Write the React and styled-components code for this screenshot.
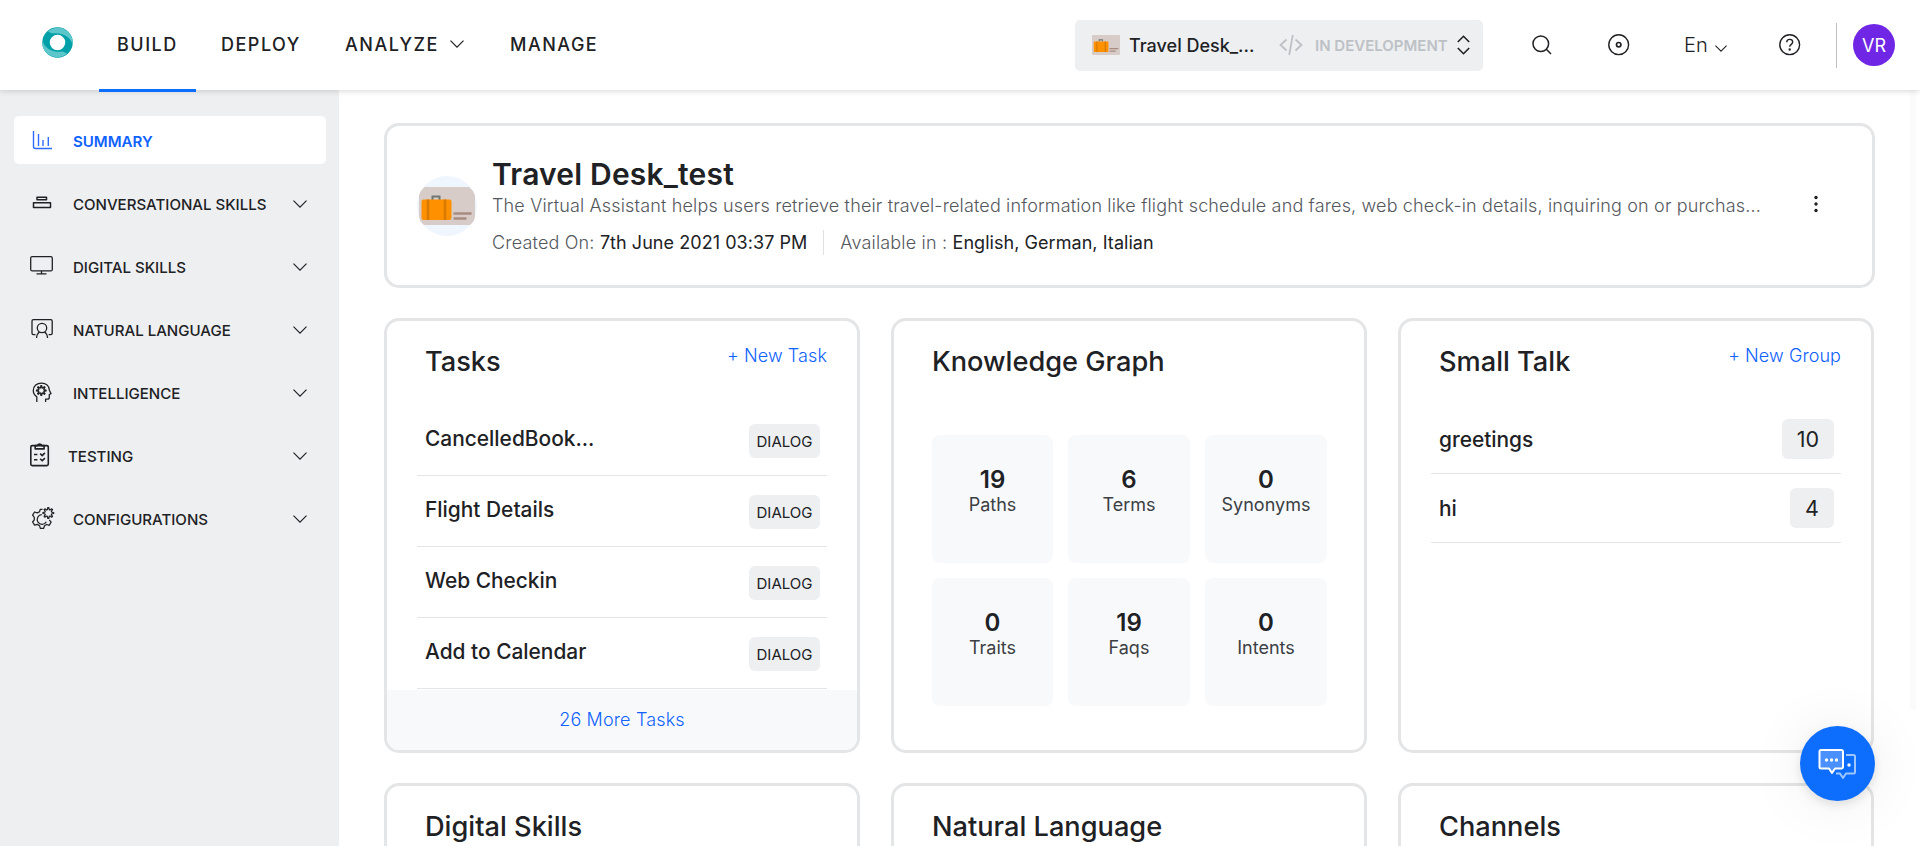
import React from "react";
import styled, { createGlobalStyle } from "styled-components";

const GlobalStyle = createGlobalStyle`
  * { box-sizing: border-box; }
  body { margin: 0; background: #fff; color: #202124; font-family: Inter, "Liberation Sans", sans-serif; overflow: hidden; }
`;

const Page = styled.div`
  display: flex;
  flex-direction: column;
  height: 846px;
  width: 1920px;
  overflow: hidden;
`;

const TopBar = styled.header`
  display: flex;
  align-items: center;
  flex: none;
  height: 90px;
  padding-left: 42px;
  background: #fff;
  box-shadow: 0 1px 6px rgba(0, 0, 0, 0.16);
  z-index: 1;
`;

const Logo = styled.svg`
  flex: none;
  margin: 0 26px 6px 0;
`;

const Nav = styled.nav`
  display: flex;
  height: 92px;
  align-self: flex-start;
  flex: 1;
`;

const NavItem = styled.a`
  display: flex;
  align-items: center;
  gap: 11px;
  width: ${(p) => p.$width}px;
  padding: 0 0 1px 18px;
  margin-right: ${(p) => p.$after || 0}px;
  border-bottom: 3px solid ${(p) => (p.$active ? "#0d6efd" : "transparent")};
  font-size: 18px;
  font-weight: 500;
  letter-spacing: 1.5px;
`;

const BotSelect = styled.div`
  display: flex;
  align-items: center;
  width: 408px;
  height: 51px;
  margin-right: 49px;
  padding-left: 17px;
  border-radius: 5px;
  background: #eeeff1;
`;

const BotName = styled.span`
  width: 140px;
  margin: 0 10px 0 9px;
  font-size: 18px;
  font-weight: 500;
`;

const BotStatus = styled.span`
  width: 142px;
  margin-left: 12px;
  font-size: 15px;
  font-weight: 600;
  color: #bdc1c6;
  white-space: nowrap;
`;

const ToolIcon = styled.svg`
  flex: none;
  margin-right: ${(p) => p.$after}px;
`;

const Language = styled.div`
  display: flex;
  align-items: center;
  gap: 7px;
  width: 95px;
  font-size: 20px;
  font-weight: 300;
  svg { margin-top: 7px; }
`;

const Avatar = styled.div`
  display: flex;
  align-items: center;
  justify-content: center;
  width: 42px;
  height: 42px;
  margin: 0 25px 0 16px;
  border-radius: 50%;
  background: #7027e5;
  color: #fff;
  font-size: 18px;
`;

const Divider = styled.span`
  width: 1px;
  height: ${(p) => p.$height}px;
  background: ${(p) => p.$color};
`;

const Body = styled.div`
  display: flex;
  flex: 1;
  min-height: 0;
`;

const Sidebar = styled.aside`
  display: flex;
  flex-direction: column;
  gap: 15px;
  width: 339px;
  flex: none;
  padding: 26px 13px 0 14px;
  background: #eeeff1;
`;

const SideItem = styled.a`
  display: grid;
  grid-template-columns: ${(p) => p.$labelAt}px 1fr 14px;
  align-items: center;
  height: 48px;
  padding: 2px 19px 0 14px;
  border-radius: 5px;
  background: ${(p) => (p.$active ? "#fff" : "transparent")};
  color: ${(p) => (p.$active ? "#0f62fe" : "#202124")};
  font-size: 15.05px;
  font-weight: ${(p) => (p.$active ? 600 : 500)};
  white-space: nowrap;
`;

const Main = styled.main`
  display: flex;
  flex-direction: column;
  gap: 30px;
  width: 1571px;
  flex: none;
  padding: 33px 36px 0 45px;
  overflow: hidden;
`;

const ScrollTrack = styled.div`
  width: 6px;
  height: 620px;
  border-radius: 0 0 4px 4px;
  background: #fbfbfc;
`;

const Card = styled.section`
  display: flex;
  flex-direction: column;
  flex: none;
  height: ${(p) => p.$height}px;
  border: 3px solid #e4e5e7;
  border-radius: 15px;
  background: #fff;
  overflow: hidden;
`;

const Summary = styled(Card)`
  flex-direction: row;
  margin-right: -1px;
  padding-left: 30px;
`;

const SummaryText = styled.div`
  width: 1280px;
  margin-left: 15px;
  padding-top: 32px;
`;

const BotTitle = styled.h1`
  margin: 0;
  font-size: 30px;
  line-height: 32px;
  font-weight: 600;
  letter-spacing: 0.2px;
`;

const Description = styled.p`
  margin: 0;
  font-size: 18px;
  line-height: 31px;
  font-weight: 300;
  letter-spacing: 0.155px;
  color: #54585d;
  white-space: nowrap;
`;

const Meta = styled.div`
  display: flex;
  align-items: center;
  height: 43px;
  font-size: 18px;
  letter-spacing: 0.05px;
  color: #202124;
  white-space: pre;
`;

const MetaLabel = styled.span`
  font-weight: 300;
  color: #54585d;
  letter-spacing: 0.18px;
`;

const MetaGap = styled.span`
  display: flex;
  padding: 0 16px;
`;

const Kebab = styled.svg`
  margin: 68px 0 0 41px;
`;

const Grid = styled.div`
  display: grid;
  grid-template-columns: repeat(3, 476px);
  gap: 30px 31px;
`;

const CardHead = styled.div`
  display: flex;
  align-items: flex-start;
  justify-content: space-between;
  flex: none;
  height: 84px;
  padding: 24px 30px 0 38px;
`;

const CardTitle = styled.h2`
  margin: 0;
  font-size: 27.2px;
  line-height: 33px;
  font-weight: 500;
`;

const AddLink = styled.a`
  font-size: 18px;
  line-height: 22px;
  font-weight: 300;
  letter-spacing: 0.08px;
  color: #0f62fe;
`;

const List = styled.div`
  margin: 0 30px;
`;

const ListRow = styled.div`
  display: flex;
  align-items: ${(p) => (p.$compact ? "center" : "flex-start")};
  justify-content: space-between;
  height: ${(p) => (p.$compact ? 69 : 71)}px;
  padding: ${(p) => (p.$compact ? "0 7px 0 8px" : "19px 7px 0 8px")};
  border-bottom: 1px solid #e4e5e7;
`;

const RowName = styled.span`
  font-size: 20.9px;
  line-height: 29px;
  font-weight: 500;
`;

const TypeTag = styled.span`
  display: flex;
  align-items: center;
  justify-content: center;
  width: 71px;
  height: 34px;
  padding-top: 1px;
  border-radius: 6px;
  background: #eeeff1;
  font-size: 15px;
`;

const CountTag = styled.span`
  padding: 0 15px;
  border-radius: 6px;
  background: #eeeff1;
  font-size: 21.5px;
  line-height: 40px;
`;

const CardFoot = styled.div`
  margin-top: auto;
  background: #f8f9fb;
  text-align: center;
  font-size: 18px;
  line-height: 60px;
  font-weight: 300;
  letter-spacing: 0.15px;
  color: #0f62fe;
`;

const Tiles = styled.div`
  display: grid;
  grid-template-columns: 121px 122px 122px;
  grid-auto-rows: 128px;
  gap: 15px;
  padding: 30px 37px 0 38px;
`;

const Tile = styled.div`
  display: flex;
  flex-direction: column;
  align-items: center;
  padding-top: 31px;
  border-radius: 8px;
  background: #f8f9fb;
  font-size: 18px;
  line-height: 22px;
  color: #3c4043;
  strong { font-size: 24px; line-height: 27px; margin-bottom: 1px; font-weight: 600; color: #202124; }
`;

const ChatButton = styled.button`
  position: absolute;
  left: 1800px;
  top: 726px;
  display: flex;
  align-items: center;
  justify-content: center;
  width: 75px;
  height: 75px;
  padding: 0;
  border: 0;
  border-radius: 50%;
  background: #0d6efd;
  box-shadow: 0 4px 10px rgba(0, 0, 0, 0.1), 0 2px 60px rgba(0, 0, 0, 0.08);
  z-index: 2;
`;

const Chevron = ({ w = 14, h = 8 }) => (
  <svg width={w} height={h} viewBox="0 0 14 8" fill="none" stroke="#202124" strokeWidth="1.2">
    <path d="M.5.6 7 7.1 13.5.6" />
  </svg>
);

const gearPath = (cx, cy, r, R, n) => {
  const pts = [];
  for (let i = 0; i < n; i++) {
    [[-0.34, r], [-0.12, R], [0.12, R], [0.34, r]].forEach(([o, rad]) => {
      const a = ((i + o) * 2 * Math.PI) / n;
      pts.push(`${(cx + rad * Math.cos(a)).toFixed(2)} ${(cy + rad * Math.sin(a)).toFixed(2)}`);
    });
  }
  return `M${pts.join("L")}Z`;
};

const sideIcons = {
  summary: <path d="M5.5 3v15.5a2 2 0 0 0 2 2H24M10.5 6v12M15 12v6M20.3 9v9" strokeWidth="1.4" />,
  skills: <path d="M9 6.2h9.5v2.6H9zM5.5 11.7h17v4.8h-17z" strokeWidth="1.5" />,
  monitor: (
    <g>
      <rect x="2.7" y="2.7" width="21.6" height="14.2" rx="1.5" />
      <path d="M13.5 17v2.7M8.5 19.8h10" />
    </g>
  ),
  language: (
    <g>
      <path d="M7.5 17.6H5.4a1.4 1.4 0 0 1-1.4-1.4V4a1.4 1.4 0 0 1 1.4-1.4h17.4A1.4 1.4 0 0 1 24.2 4v12.200a1.4 1.4 0 0 1-1.4 1.4h-2.2" />
      <circle cx="14" cy="11" r="4.7" />
      <path d="M8.5 21c.3-2.8 1.3-4.9 3-6M19.6 21c-.3-2.8-1.3-4.9-3-6" />
    </g>
  ),
  intelligence: (
    <g strokeWidth="1.3">
      <path d="M8.8 22v-5.2C6.5 15.2 5.3 13 5.3 10.5 5.3 6 9 3.1 13.5 3.1c4.5 0 7.700 2.8 7.9 7.2L23 13.6l-1.7.9v2.7c0 1.4-.8 2-2 2h-1.7V22" />
      <path d={gearPath(13.3, 10.5, 2.8, 4.8, 8)} />
    </g>
  ),
  testing: (
    <g strokeWidth="1.6" transform="translate(.2 0)">
      <rect x="2.6" y="2.6" width="17.5" height="20" rx="1.5" />
      <path d="M7 2.6h2.2a2.4 2.4 0 0 1 4.4 0h2.3v3.3H7zM5.800 11.5h3.4M5.800 16.7h3.4M12 10.6l2 2 2.7-2.7M12 15.8l2 2 2.7-2.7" />
    </g>
  ),
  config: (
    <g strokeWidth="1.25">
      <path d="M14.5 3.3h-2.3l-.6 2.4-2.3 1.2-2.7-.9-2 3.2 1.7 2.2v2.4L4.6 16l2 3.2 2.7-.8 2.3 1.3.7 2.6h3.4l.8-2.6 2.2-1.2 2.6.8 1.8-3.2-1.8-2.3" />
      <path d="M13.8 8.7a4.8 4.8 0 1 0 4.5 7" />
      <path d={gearPath(20.3, 7, 3.5, 5.4, 8)} />
    </g>
  ),
};

const SideIcon = ({ name, active }) => (
  <svg width="27" height="26" viewBox="0 0 27 26" fill="none" stroke={active ? "#2f6bff" : "#202124"} strokeWidth="1.3" strokeLinejoin="round">
    {sideIcons[name]}
  </svg>
);

const Luggage = () => (
  <g>
    <path d="M15.5 24v-3.5h7V24" fill="none" stroke="#6f7774" strokeWidth="2" />
    <rect x="4.500" y="23.5" width="30" height="20.5" rx="2" fill="#ff9100" />
    <path d="M11 23.5v20.500M28 23.5v20.5" stroke="#d97b00" strokeWidth="2.6" />
    <path d="M36.5 37.5h18M36.5 42.5h13" stroke="#a98a82" strokeWidth="2.6" />
  </g>
);

const BotCircle = styled.svg`
  flex: none;
  margin-top: 50px;
`;

const BotPicture = () => (
  <BotCircle width="60" height="60" viewBox="0 0 60 60">
    <circle cx="30" cy="30" r="30" fill="#f0f6ff" />
    <path d="M7.5 11h44.5q6 5 6 10v19q0 5-5 9H7q-5-4-5-9V21q0-5 5.500-10z" fill="#d7ccc8" />
    <Luggage />
  </BotCircle>
);

const BotThumb = () => (
  <svg width="28" height="20" viewBox="1 11 57 39" preserveAspectRatio="none">
    <rect x="1" y="11" width="57" height="39" rx="2" fill="#d7ccc8" />
    <Luggage />
  </svg>
);

const sideItems = [
  ["SUMMARY", "summary"],
  ["CONVERSATIONAL SKILLS", "skills"],
  ["DIGITAL SKILLS", "monitor"],
  ["NATURAL LANGUAGE", "language"],
  ["INTELLIGENCE", "intelligence"],
  ["TESTING", "testing"],
  ["CONFIGURATIONS", "config"],
];

const tasks = ["CancelledBook...", "Flight Details", "Web Checkin", "Add to Calendar"];
const graph = [[19, "Paths"], [6, "Terms"], [0, "Synonyms"], [0, "Traits"], [19, "Faqs"], [0, "Intents"]];
const talks = [["greetings", 10], ["hi", 4]];

export default function App() {
  return (
    <Page>
      <GlobalStyle />
      <TopBar>
        <Logo width="31" height="31" viewBox="0 0 31 31" fill="none">
          <circle cx="15.5" cy="15.5" r="11.5" stroke="#00a0a8" strokeWidth="7.5" />
          <path d="M6 4.5C13-2 26 0 30 10.5c1 3 1 5 .5 7C28 8 18 5 10 6.500z" fill="#5cc6cb" />
          <path d="M25 26.5C18 33 5 31 1 20.5c-1-3-1-5-.5-7C3 23 13 26 21 24.500z" fill="#5cc6cb" />
        </Logo>
        <Nav>
          <NavItem $active $width={97} $after={7}>BUILD</NavItem>
          <NavItem $width={124}>DEPLOY</NavItem>
          <NavItem $width={165}>ANALYZE <Chevron /></NavItem>
          <NavItem $width={130}>MANAGE</NavItem>
        </Nav>
        <BotSelect>
          <BotThumb />
          <BotName>Travel Desk_...</BotName>
          <svg width="24" height="22" viewBox="0 0 24 22" fill="none" stroke="#bdc1c6" strokeWidth="1.8">
            <path d="m7.5 5.5-6 5.500 6 5.500M16.500 5.500l6 5.500-6 5.500M13.800 1l-3.600 20" />
          </svg>
          <BotStatus>IN DEVELOPMENT</BotStatus>
          <svg width="13" height="20" viewBox="0 0 13 20" fill="none" stroke="#202124" strokeWidth="1.6">
            <path d="m.8 7 5.700-5.700L12.200 7M.8 13l5.700 5.700 5.700-5.700" />
          </svg>
        </BotSelect>
        <ToolIcon $after={56} width="20" height="20" viewBox="0 0 20 20" fill="none" stroke="#202124" strokeWidth="1.5">
          <circle cx="8.800" cy="8.800" r="7.800" />
          <path d="m14.300 14.300 4.700 4.700" />
        </ToolIcon>
        <ToolIcon $after={54} width="22" height="22" viewBox="0 0 22 22" fill="none" stroke="#202124" strokeWidth="1.4">
          <circle cx="10.700" cy="10.700" r="9.900" />
          <circle cx="10.700" cy="10.700" r="2.200" strokeWidth="1.700" />
        </ToolIcon>
        <Language>En <Chevron w={12} h={7} /></Language>
        <ToolIcon $after={35} width="22" height="22" viewBox="0 0 22 22" fill="none" stroke="#202124" strokeWidth="1.4">
          <circle cx="10.700" cy="10.700" r="9.900" />
          <path d="M7.700 8.300c0-1.900 1.300-2.900 3-2.900s3 1.100 3 2.700c0 2.300-3 2.200-3 4.700" />
          <circle cx="10.700" cy="15.500" r=".5" fill="#202124" />
        </ToolIcon>
        <Divider $height={45} $color="#bdc1c6" />
        <Avatar>VR</Avatar>
      </TopBar>
      <Body>
        <Sidebar>
          {sideItems.map(([label, icon], i) => (
            <SideItem key={label} $active={i === 0} $labelAt={icon === "testing" ? 40 : 45}>
              <SideIcon name={icon} active={i === 0} />
              <span>{label}</span>
              {i > 0 && <Chevron />}
            </SideItem>
          ))}
        </Sidebar>
        <Main>
          <Summary $height={165}>
            <BotPicture />
            <SummaryText>
              <BotTitle>Travel Desk_test</BotTitle>
              <Description>
                The Virtual Assistant helps users retrieve their travel-related information like flight schedule and fares, web check-in details, inquiring on or purchas...
              </Description>
              <Meta>
                <MetaLabel>Created On: </MetaLabel>7th June 2021 03:37 PM
                <MetaGap><Divider $height={25} $color="#dfe1e4" /></MetaGap>
                <MetaLabel>Available in : </MetaLabel>English, German, Italian
              </Meta>
            </SummaryText>
            <Kebab width="6" height="20" viewBox="0 0 6 20" fill="#202124">
              <circle cx="3" cy="3.500" r="1.700" /><circle cx="3" cy="10" r="1.700" /><circle cx="3" cy="16.500" r="1.700" />
            </Kebab>
          </Summary>
          <Grid>
            <Card $height={435}>
              <CardHead><CardTitle>Tasks</CardTitle><AddLink>+ New Task</AddLink></CardHead>
              <List>
                {tasks.map((t) => (
                  <ListRow key={t}><RowName>{t}</RowName><TypeTag>DIALOG</TypeTag></ListRow>
                ))}
              </List>
              <CardFoot>26 More Tasks</CardFoot>
            </Card>
            <Card $height={435}>
              <CardHead><CardTitle>Knowledge Graph</CardTitle></CardHead>
              <Tiles>
                {graph.map(([n, label]) => (
                  <Tile key={label}><strong>{n}</strong>{label}</Tile>
                ))}
              </Tiles>
            </Card>
            <Card $height={435}>
              <CardHead><CardTitle>Small Talk</CardTitle><AddLink>+ New Group</AddLink></CardHead>
              <List>
                {talks.map(([name, count]) => (
                  <ListRow $compact key={name}><RowName>{name}</RowName><CountTag>{count}</CountTag></ListRow>
                ))}
              </List>
            </Card>
            {["Digital Skills", "Natural Language", "Channels"].map((t) => (
              <Card $height={435} key={t}><CardHead><CardTitle>{t}</CardTitle></CardHead></Card>
            ))}
          </Grid>
        </Main>
        <ScrollTrack />
      </Body>
      <ChatButton>
        <svg width="39" height="32" viewBox="0 0 39 32" fill="none" strokeWidth="2" strokeLinejoin="round">
          <path d="M28 7h7.500a1.500 1.500 0 0 1 1.500 1.500v15.500a1.500 1.500 0 0 1-1.500 1.500H28l-3 4.500-3-4.500h-4" stroke="#9ec5fe" />
          <path d="M3 2h20.500A1.500 1.500 0 0 1 25 3.500V19a1.500 1.500 0 0 1-1.500 1.500H17l-3 4.500-3-4.500H3A1.500 1.500 0 0 1 1.500 19V3.500A1.500 1.500 0 0 1 3 2z" fill="#4a90fe" stroke="#fff" />
          <g fill="#fff"><circle cx="8.500" cy="12" r="1.700" /><circle cx="13.500" cy="12" r="1.700" /><circle cx="18.500" cy="12" r="1.700" /><circle cx="31" cy="17" r="1.700" /></g>
        </svg>
      </ChatButton>
    </Page>
  );
}
